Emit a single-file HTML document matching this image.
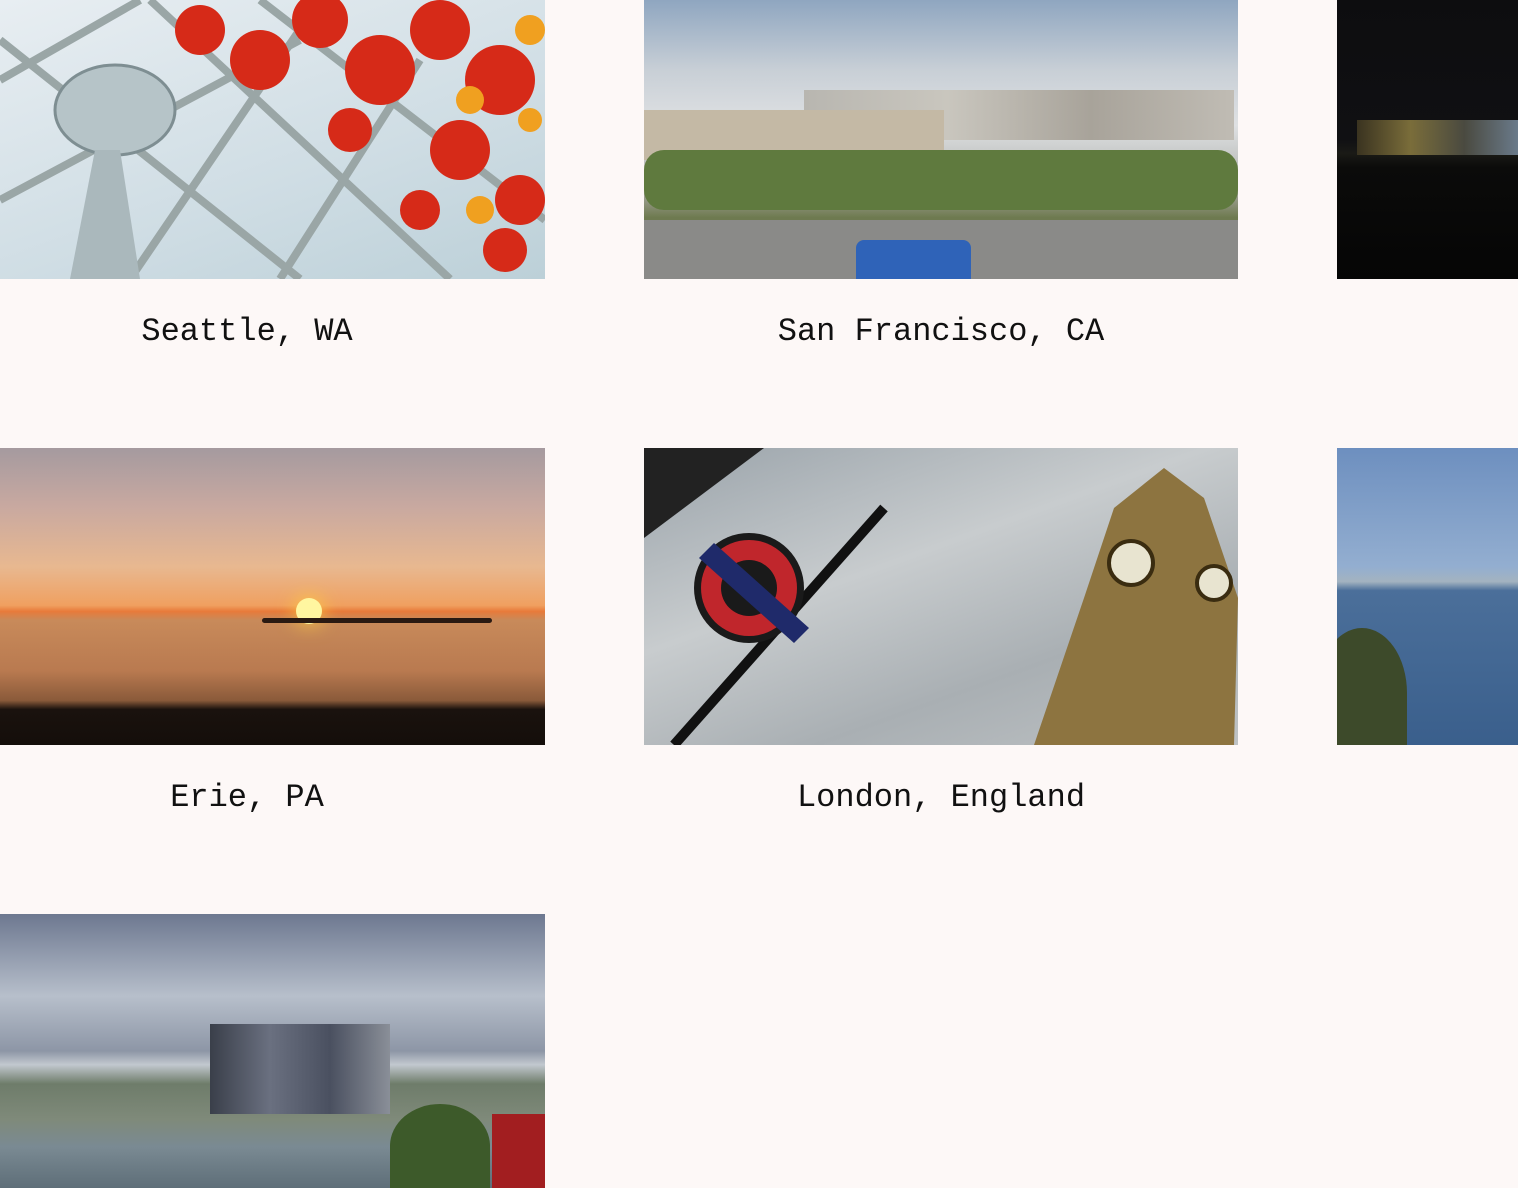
<!DOCTYPE html>
<html><head><meta charset="utf-8"><style>
html,body{margin:0;padding:0}
body{width:1518px;height:1188px;background:#fdf8f7;position:relative;overflow:hidden;font-family:"Liberation Mono","Courier New",monospace}
.img{position:absolute;overflow:hidden}
.cap{position:absolute;font-size:32px;color:#111;white-space:nowrap;transform:translateX(-50%)}
</style></head><body>

<!-- Seattle -->
<div class="img" style="left:0;top:0;width:545px;height:279px;background:linear-gradient(160deg,#e8eef2,#cfdde4 60%,#bcd0d8)">
 <svg width="545" height="279" style="position:absolute;left:0;top:0">
  <g stroke="#9aa6a6" stroke-width="8" fill="none">
   <line x1="0" y1="80" x2="140" y2="0"/><line x1="0" y1="200" x2="300" y2="40"/>
   <line x1="130" y1="279" x2="320" y2="0"/><line x1="280" y1="279" x2="420" y2="60"/>
   <line x1="0" y1="40" x2="300" y2="279"/><line x1="150" y1="0" x2="450" y2="279"/>
   <line x1="260" y1="0" x2="545" y2="220"/>
  </g>
  <ellipse cx="115" cy="110" rx="60" ry="45" fill="#b6c4c8" stroke="#7e8e92" stroke-width="3"/>
  <path d="M95 150 L70 279 L140 279 L120 150Z" fill="#aab8bc"/>
  <g fill="#d62a18"><circle cx="200" cy="30" r="25"/><circle cx="260" cy="60" r="30"/><circle cx="320" cy="20" r="28"/><circle cx="380" cy="70" r="35"/><circle cx="440" cy="30" r="30"/><circle cx="500" cy="80" r="35"/><circle cx="460" cy="150" r="30"/><circle cx="520" cy="200" r="25"/><circle cx="350" cy="130" r="22"/><circle cx="420" cy="210" r="20"/><circle cx="505" cy="250" r="22"/></g>
  <g fill="#f0a020"><circle cx="530" cy="30" r="15"/><circle cx="470" cy="100" r="14"/><circle cx="480" cy="210" r="14"/><circle cx="530" cy="120" r="12"/></g>
 </svg>
</div>
<div class="cap" style="left:247px;top:313px">Seattle, WA</div>

<!-- SF -->
<div class="img" style="left:644px;top:0;width:594px;height:279px;background:linear-gradient(180deg,#8fa6c0 0%,#c8cfd6 25%,#dfe1e3 45%,#c2c4c2 58%,#a9a9a3 68%,#6e7a4f 78%,#7a7c78 100%)">
 <div style="position:absolute;left:160px;top:90px;width:430px;height:50px;background:linear-gradient(90deg,#b8b6b0,#c9c6be,#a8a39a,#c0bcb4)"></div>
 <div style="position:absolute;left:0;top:110px;width:300px;height:50px;background:#c4b9a5"></div>
 <div style="position:absolute;left:0;top:150px;width:594px;height:60px;background:#5f7a3e;border-radius:20px"></div>
 <div style="position:absolute;left:0;top:220px;width:594px;height:59px;background:#8a8a88"></div>
 <div style="position:absolute;left:212px;top:240px;width:115px;height:39px;background:#2f63b8;border-radius:8px 8px 0 0"></div>
</div>
<div class="cap" style="left:941px;top:313px">San Francisco, CA</div>

<!-- Night -->
<div class="img" style="left:1337px;top:0;width:181px;height:279px;background:linear-gradient(180deg,#0d0d0f 0%,#101013 50%,#1a1a16 55%,#0b0b0a 60%,#050505 100%)">
 <div style="position:absolute;left:20px;top:120px;width:161px;height:35px;background:linear-gradient(90deg,#3a3320,#7a6d3a,#4a4a40,#6a7a8a)"></div>
</div>

<!-- Erie -->
<div class="img" style="left:0;top:448px;width:545px;height:297px;background:linear-gradient(180deg,#a59a9f 0%,#c9a9a0 20%,#e8b890 40%,#f0a060 53%,#e87a3a 55%,#c88a5a 58%,#b97a50 75%,#8a5a3a 85%,#1a120e 88%,#140e0a 100%)">
 <div style="position:absolute;left:296px;top:150px;width:26px;height:26px;border-radius:50%;background:#fff6a0;box-shadow:0 0 20px #ffd040"></div>
 <div style="position:absolute;left:262px;top:170px;width:230px;height:5px;background:#2a1a12;border-radius:3px"></div>
</div>
<div class="cap" style="left:247px;top:779px">Erie, PA</div>

<!-- London -->
<div class="img" style="left:644px;top:448px;width:594px;height:297px;background:linear-gradient(160deg,#9aa3aa,#c8ccce 40%,#a9afb3 70%,#bfc3c5)">
 <svg width="594" height="297" style="position:absolute;left:0;top:0">
  <path d="M0 0 L120 0 L0 90Z" fill="#222"/>
  <line x1="30" y1="297" x2="240" y2="60" stroke="#111" stroke-width="10"/>
  <circle cx="105" cy="140" r="55" fill="#1a1a1a"/>
  <circle cx="105" cy="140" r="48" fill="#c0262c"/>
  <circle cx="105" cy="140" r="28" fill="#1a1a1a"/>
  <path d="M70 95 L165 180 L150 195 L55 110Z" fill="#1f2a6a"/>
  <path d="M390 297 L440 150 L470 60 L520 20 L560 50 L594 150 L590 297Z" fill="#8d7440"/>
  <circle cx="487" cy="115" r="22" fill="#e8e4d0" stroke="#3a2c10" stroke-width="4"/>
  <circle cx="570" cy="135" r="17" fill="#e8e4d0" stroke="#3a2c10" stroke-width="4"/>
 </svg>
</div>
<div class="cap" style="left:941px;top:779px">London, England</div>

<!-- Coast -->
<div class="img" style="left:1337px;top:448px;width:181px;height:297px;background:linear-gradient(180deg,#6d8fbf 0%,#93aed0 40%,#a3b3c0 45%,#4b6f9a 48%,#3a5f8c 100%)">
 <div style="position:absolute;left:-20px;top:180px;width:90px;height:130px;background:#3d4a2a;border-radius:50% 50% 0 0"></div>
</div>

<!-- Pittsburgh -->
<div class="img" style="left:0;top:914px;width:545px;height:274px;background:linear-gradient(180deg,#6d7890 0%,#b7bfcb 30%,#8d96a6 50%,#c2c8cf 55%,#6e7c6a 62%,#7f8a7a 75%,#7a8a93 85%,#5e6e78 100%)">
 <div style="position:absolute;left:210px;top:110px;width:180px;height:90px;background:linear-gradient(90deg,#3a3f4a,#6a7080,#4a5060,#8a8f98)"></div>
 <div style="position:absolute;left:492px;top:200px;width:53px;height:74px;background:#a21e20"></div>
 <div style="position:absolute;left:390px;top:190px;width:100px;height:84px;background:#3d5a2a;border-radius:50% 50% 0 0"></div>
</div>

</body></html>
